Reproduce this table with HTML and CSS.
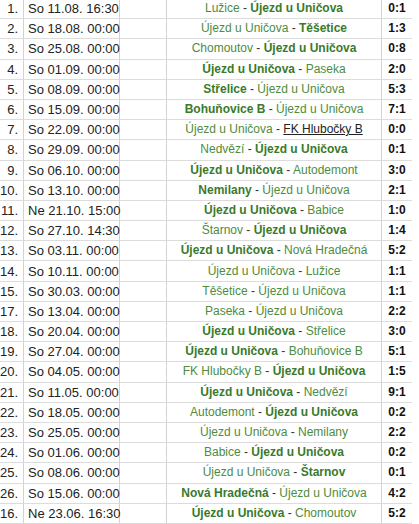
FILE: index.html
```html
<!DOCTYPE html>
<html lang="cs">
<head>
<meta charset="utf-8">
<title>Zápasy</title>
<link rel="stylesheet" href="styles.css">
</head>
<body>
<table class="matches">
<tbody>
<tr><td class="no">1.</td><td class="date">So 11.08. 16:30</td><td class="gap"></td><td class="match"><span class="team">Lužice</span> - <b class="win">Újezd u Uničova</b></td><td class="score">0:1</td></tr>
<tr><td class="no">2.</td><td class="date">So 18.08. 00:00</td><td class="gap"></td><td class="match"><span class="team">Újezd u Uničova</span> - <b class="win">Těšetice</b></td><td class="score">1:3</td></tr>
<tr><td class="no">3.</td><td class="date">So 25.08. 00:00</td><td class="gap"></td><td class="match"><span class="team">Chomoutov</span> - <b class="win">Újezd u Uničova</b></td><td class="score">0:8</td></tr>
<tr><td class="no">4.</td><td class="date">So 01.09. 00:00</td><td class="gap"></td><td class="match"><b class="win">Újezd u Uničova</b> - <span class="team">Paseka</span></td><td class="score">2:0</td></tr>
<tr><td class="no">5.</td><td class="date">So 08.09. 00:00</td><td class="gap"></td><td class="match"><b class="win">Střelice</b> - <span class="team">Újezd u Uničova</span></td><td class="score">5:3</td></tr>
<tr><td class="no">6.</td><td class="date">So 15.09. 00:00</td><td class="gap"></td><td class="match"><b class="win">Bohuňovice B</b> - <span class="team">Újezd u Uničova</span></td><td class="score">7:1</td></tr>
<tr><td class="no">7.</td><td class="date">So 22.09. 00:00</td><td class="gap"></td><td class="match"><span class="team">Újezd u Uničova</span> - <span class="link">FK Hlubočky B</span></td><td class="score">0:0</td></tr>
<tr><td class="no">8.</td><td class="date">So 29.09. 00:00</td><td class="gap"></td><td class="match"><span class="team">Nedvězí</span> - <b class="win">Újezd u Uničova</b></td><td class="score">0:1</td></tr>
<tr><td class="no">9.</td><td class="date">So 06.10. 00:00</td><td class="gap"></td><td class="match"><b class="win">Újezd u Uničova</b> - <span class="team">Autodemont</span></td><td class="score">3:0</td></tr>
<tr><td class="no">10.</td><td class="date">So 13.10. 00:00</td><td class="gap"></td><td class="match"><b class="win">Nemilany</b> - <span class="team">Újezd u Uničova</span></td><td class="score">2:1</td></tr>
<tr><td class="no">11.</td><td class="date">Ne 21.10. 15:00</td><td class="gap"></td><td class="match"><b class="win">Újezd u Uničova</b> - <span class="team">Babice</span></td><td class="score">1:0</td></tr>
<tr><td class="no">12.</td><td class="date">So 27.10. 14:30</td><td class="gap"></td><td class="match"><span class="team">Štarnov</span> - <b class="win">Újezd u Uničova</b></td><td class="score">1:4</td></tr>
<tr><td class="no">13.</td><td class="date">So 03.11. 00:00</td><td class="gap"></td><td class="match"><b class="win">Újezd u Uničova</b> - <span class="team">Nová Hradečná</span></td><td class="score">5:2</td></tr>
<tr><td class="no">14.</td><td class="date">So 10.11. 00:00</td><td class="gap"></td><td class="match"><span class="team">Újezd u Uničova</span> - <span class="team">Lužice</span></td><td class="score">1:1</td></tr>
<tr><td class="no">15.</td><td class="date">So 30.03. 00:00</td><td class="gap"></td><td class="match"><span class="team">Těšetice</span> - <span class="team">Újezd u Uničova</span></td><td class="score">1:1</td></tr>
<tr><td class="no">17.</td><td class="date">So 13.04. 00:00</td><td class="gap"></td><td class="match"><span class="team">Paseka</span> - <span class="team">Újezd u Uničova</span></td><td class="score">2:2</td></tr>
<tr><td class="no">18.</td><td class="date">So 20.04. 00:00</td><td class="gap"></td><td class="match"><b class="win">Újezd u Uničova</b> - <span class="team">Střelice</span></td><td class="score">3:0</td></tr>
<tr><td class="no">19.</td><td class="date">So 27.04. 00:00</td><td class="gap"></td><td class="match"><b class="win">Újezd u Uničova</b> - <span class="team">Bohuňovice B</span></td><td class="score">5:1</td></tr>
<tr><td class="no">20.</td><td class="date">So 04.05. 00:00</td><td class="gap"></td><td class="match"><span class="team">FK Hlubočky B</span> - <b class="win">Újezd u Uničova</b></td><td class="score">1:5</td></tr>
<tr><td class="no">21.</td><td class="date">So 11.05. 00:00</td><td class="gap"></td><td class="match"><b class="win">Újezd u Uničova</b> - <span class="team">Nedvězí</span></td><td class="score">9:1</td></tr>
<tr><td class="no">22.</td><td class="date">So 18.05. 00:00</td><td class="gap"></td><td class="match"><span class="team">Autodemont</span> - <b class="win">Újezd u Uničova</b></td><td class="score">0:2</td></tr>
<tr><td class="no">23.</td><td class="date">So 25.05. 00:00</td><td class="gap"></td><td class="match"><span class="team">Újezd u Uničova</span> - <span class="team">Nemilany</span></td><td class="score">2:2</td></tr>
<tr><td class="no">24.</td><td class="date">So 01.06. 00:00</td><td class="gap"></td><td class="match"><span class="team">Babice</span> - <b class="win">Újezd u Uničova</b></td><td class="score">0:2</td></tr>
<tr><td class="no">25.</td><td class="date">So 08.06. 00:00</td><td class="gap"></td><td class="match"><span class="team">Újezd u Uničova</span> - <b class="win">Štarnov</b></td><td class="score">0:1</td></tr>
<tr><td class="no">26.</td><td class="date">So 15.06. 00:00</td><td class="gap"></td><td class="match"><b class="win">Nová Hradečná</b> - <span class="team">Újezd u Uničova</span></td><td class="score">4:2</td></tr>
<tr><td class="no">16.</td><td class="date">Ne 23.06. 16:30</td><td class="gap"></td><td class="match"><b class="win">Újezd u Uničova</b> - <span class="team">Chomoutov</span></td><td class="score">5:2</td></tr>
</tbody>
</table>
</body>
</html>
```

FILE: styles.css
```css
html, body {
  margin: 0;
  padding: 0;
  background: #ffffff;
  overflow: hidden;
}

.matches {
  margin-top: -1px;
  width: 412px;
  table-layout: fixed;
  border-collapse: separate;
  border-spacing: 0;
  font-family: "Liberation Sans", Arial, sans-serif;
  font-size: 12px;
  color: #222222;
}

.matches tr {
  height: 20.2px;
}

.matches td {
  box-sizing: border-box;
  padding: 0;
  line-height: 15px;
  border-right: 1px solid #d2d2d2;
  border-bottom: 1px solid #dcdcdc;
  white-space: nowrap;
  vertical-align: middle;
}

.matches td.no {
  width: 24px;
  text-align: right;
  padding-right: 5px;
  font-size: 13px;
}

.matches td.date {
  width: 96px;
  padding-left: 4px;
  font-size: 13px;
}

.matches td.gap {
  width: 47px;
}

.matches td.match {
  width: 215px;
  text-align: center;
  color: #333333;
}

.matches td.score {
  width: 30px;
  text-align: center;
  font-weight: bold;
  font-size: 12px;
  color: #111111;
  border-right: none;
}

.team {
  color: #4e8c40;
}

.win {
  color: #3a7a2c;
  font-weight: bold;
}

.link {
  color: #222222;
  text-decoration: underline;
}
```
